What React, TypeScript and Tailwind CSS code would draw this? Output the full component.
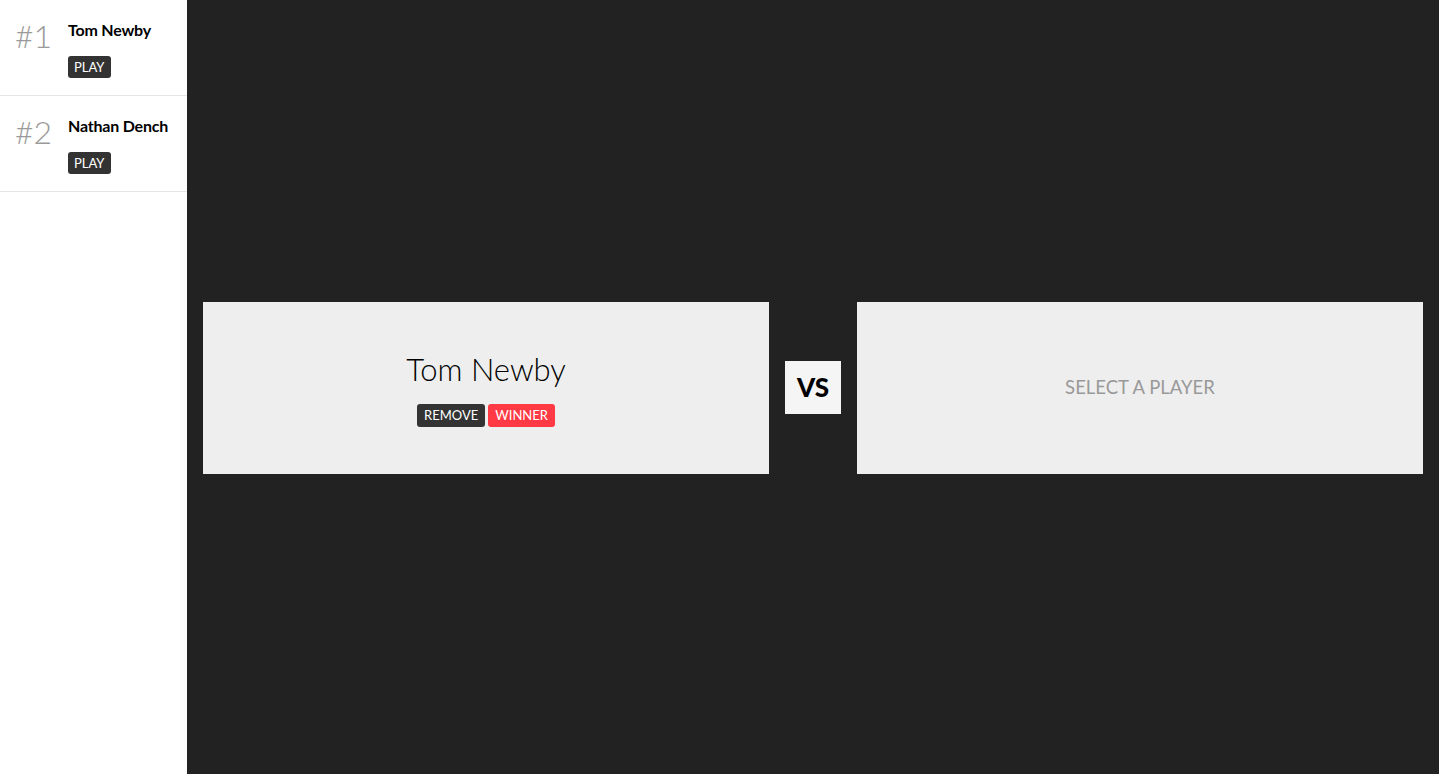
import React from "react";

const players = [
  { rank: 1, name: "Tom Newby" },
  { rank: 2, name: "Nathan Dench" },
];

export default function App() {
  return (
    <div className="flex h-[774px] w-full font-['Lato','Noto_Sans',sans-serif]">
      <aside className="w-[187px] shrink-0 bg-white">
        {players.map((p) => (
          <div key={p.rank} className="flex h-[96px] border-b border-[#e5e5e5] pl-[15px] pt-[17px]">
            <div className="w-[53px] text-[32px] font-light leading-[38px] text-[#9a9a9a]">#{p.rank}</div>
            <div className="flex flex-col items-start">
              <div className="text-[16px] font-bold leading-[26px] tracking-[-0.2px] text-black">{p.name}</div>
              <button className="mt-[13px] h-[22px] rounded-[3px] bg-[#333] px-[6px] text-[13px] leading-[22px] text-white">PLAY</button>
            </div>
          </div>
        ))}
      </aside>
      <main className="flex flex-1 items-center gap-4 bg-[#222] px-4 pt-[2px]">
        <div className="flex h-[172px] flex-1 flex-col items-center justify-center bg-[#eee]">
          <div className="text-[31px] font-light leading-[40px] text-black">Tom Newby</div>
          <div className="mt-[15px] flex gap-[3px]">
            <button className="h-[23px] rounded-[3px] bg-[#333] px-[7px] text-[13px] leading-[23px] text-white">REMOVE</button>
            <button className="h-[23px] rounded-[3px] bg-[#ff3a45] px-[7px] text-[13px] leading-[23px] text-white">WINNER</button>
          </div>
        </div>
        <div className="mb-[2px] flex h-[53px] w-[56px] items-center justify-center bg-[#f5f5f5] text-[26px] font-black text-black">VS</div>
        <div className="flex h-[172px] flex-1 items-center justify-center bg-[#eee]">
          <div className="text-[18.5px] text-[#999]">SELECT A PLAYER</div>
        </div>
      </main>
    </div>
  );
}
